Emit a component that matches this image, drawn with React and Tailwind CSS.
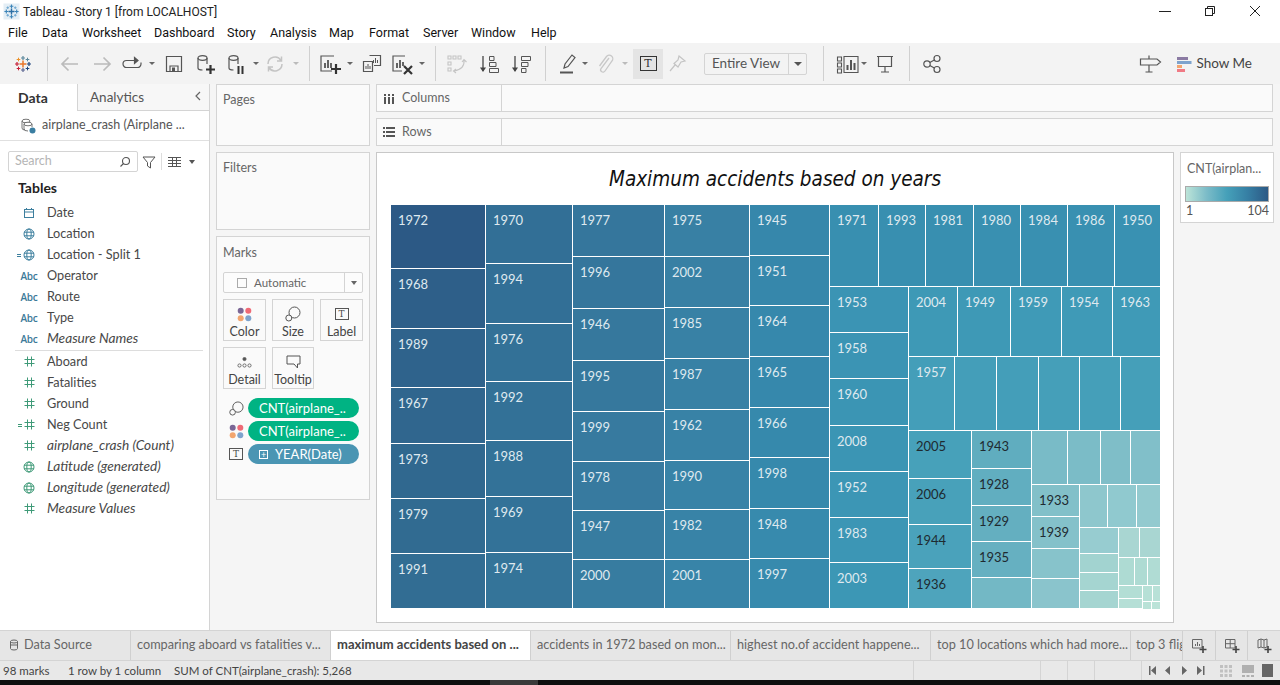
import React from "react";

const S = ({ children, className = "w-6 h-6", vb = "0 0 24 24" }) => (
  <svg viewBox={vb} className={"shrink-0 " + className} fill="none" stroke="#555" strokeWidth="1.2">{children}</svg>
);
const Caret = ({ className = "", color = "border-t-[#666]" }) => (
  <span className={"shrink-0 w-2 h-6 flex items-center justify-center " + className}>
    <span className={"block w-0 h-0 border-x-[3px] border-x-transparent border-t-[3.5px] " + color}></span>
  </span>
);
const Div = ({ className = "" }) => <span className={"shrink-0 w-px h-[35px] bg-[#d0d0d0] " + className}></span>;

const Cross = ({ x, y, c, r = 3, w = 1.5 }) => (
  <g stroke={c} strokeWidth={w}>
    <path d={`M${x - r} ${y}H${x + r}M${x} ${y - r}V${y + r}`} />
  </g>
);
const TabLogo = ({ className = "w-[18px] h-[18px]" }) => (
  <svg viewBox="0 0 18 18" className={"shrink-0 " + className}>
    <Cross x={9} y={9} c="#e8762b" r={3.5} />
    <Cross x={9} y={3} c="#5b879b" r={2} w={1.2} />
    <Cross x={9} y={15} c="#5b6591" r={2} w={1.2} />
    <Cross x={3} y={9} c="#c72037" r={2} w={1.2} />
    <Cross x={15} y={9} c="#1f457e" r={2} w={1.2} />
    <Cross x={4.5} y={4.5} c="#eb9129" r={1.8} w={1} />
    <Cross x={13.5} y={4.5} c="#5b879b" r={1.8} w={1} />
    <Cross x={4.5} y={13.5} c="#c72037" r={1.8} w={1} />
    <Cross x={13.5} y={13.5} c="#1f457e" r={1.8} w={1} />
  </svg>
);
const TitleLogo = () => (
  <svg viewBox="0 0 18 18" className="w-[17px] h-[17px] shrink-0 ml-px">
    <rect x="0.5" y="0.5" width="17" height="17" fill="#e4eef5" />
    <Cross x={9} y={9} c="#2b6ea5" r={3.2} />
    <Cross x={9} y={3.5} c="#3c84b8" r={2} w={1.2} />
    <Cross x={9} y={14.5} c="#3c84b8" r={2} w={1.2} />
    <Cross x={3.5} y={9} c="#3c84b8" r={2} w={1.2} />
    <Cross x={14.5} y={9} c="#3c84b8" r={2} w={1.2} />
    <Cross x={5} y={5} c="#6aa5cf" r={1.4} w={1} />
    <Cross x={13} y={5} c="#6aa5cf" r={1.4} w={1} />
    <Cross x={5} y={13} c="#6aa5cf" r={1.4} w={1} />
    <Cross x={13} y={13} c="#6aa5cf" r={1.4} w={1} />
  </svg>
);
const Dots = ({ className = "w-[15px] h-[15px]" }) => (
  <svg viewBox="0 0 15 15" className={"shrink-0 " + className}>
    <circle cx="3.7" cy="3.7" r="3" fill="#7b6796" />
    <circle cx="11.3" cy="3.7" r="3" fill="#ef6a76" />
    <circle cx="3.7" cy="11.3" r="3" fill="#f2a56f" />
    <circle cx="11.3" cy="11.3" r="3" fill="#7ea3cd" />
  </svg>
);
const SizeIcon = ({ className = "w-4 h-4" }) => (
  <svg viewBox="0 0 16 16" className={"shrink-0 " + className} fill="none" stroke="#555" strokeWidth="1">
    <circle cx="9.5" cy="6.5" r="5.5" fill="#fafafa" />
    <circle cx="3.8" cy="12" r="3" fill="#fafafa" />
  </svg>
);
const TBox = ({ className = "w-[14px] h-[12px]" }) => (
  <span className={"shrink-0 border border-[#555] flex items-center justify-center text-[9px] leading-none font-['DejaVu_Serif',serif] text-[#444] " + className}>T</span>
);

const Globe = ({ c = "#3d7f9e" }) => (
  <svg viewBox="0 0 12 12" className="w-3 h-3 shrink-0" fill="none" stroke={c} strokeWidth="1">
    <circle cx="6" cy="6" r="5" />
    <ellipse cx="6" cy="6" rx="2.2" ry="5" />
    <path d="M1 4.2H11M1 7.8H11" />
  </svg>
);
const Hash = () => (
  <svg viewBox="0 0 11 11" className="w-[11px] h-[11px] shrink-0" fill="none" stroke="#3f9a78" strokeWidth="1">
    <path d="M3.5 0.5V10.5M7.5 0.5V10.5M0.5 3.5H10.5M0.5 7.5H10.5" />
  </svg>
);
const Cal = () => (
  <svg viewBox="0 0 12 12" className="w-3 h-3 shrink-0" fill="none" stroke="#3d7f9e" strokeWidth="1">
    <rect x="1.5" y="2.5" width="9" height="8" />
    <path d="M1.5 5H10.5M3.5 1V3M8.5 1V3" />
  </svg>
);
const Abc = () => <span className="text-[10px] font-semibold text-[#3d7a99] leading-none font-['Open_Sans',sans-serif] tracking-[-0.2px]">Abc</span>;
const Eq = ({ c }) => <span className={"absolute left-[-6px] top-[5px] w-[4px] h-[3px] border-y " + c}></span>;

const fields1 = [
  ["Date", <Cal />],
  ["Location", <Globe />],
  ["Location - Split 1", <span className="relative flex"><Eq c="border-[#3d7f9e]" /><Globe /></span>],
  ["Operator", <Abc />],
  ["Route", <Abc />],
  ["Type", <Abc />],
  ["Measure Names", <Abc />, true],
];
const fields2 = [
  ["Aboard", <Hash />],
  ["Fatalities", <Hash />],
  ["Ground", <Hash />],
  ["Neg Count", <span className="relative flex"><Eq c="border-[#3f9a78]" /><Hash /></span>],
  ["airplane_crash (Count)", <Hash />, true],
  ["Latitude (generated)", <Globe c="#3f9a78" />, true],
  ["Longitude (generated)", <Globe c="#3f9a78" />, true],
  ["Measure Values", <Hash />, true],
];
const Field = ({ f }) => (
  <div className="h-[21px] flex items-center">
    <span className="w-[47px] pl-[17px] pr-[6px] flex justify-center shrink-0">{f[1]}</span>
    <span className={"text-[#484848] whitespace-nowrap " + (f[2] ? "italic text-[13.7px]" : "text-[12.7px]")}>{f[0]}</span>
  </div>
);

/* treemap data: boundaries are the first pixel of each tile, the last entry one past the end */
const L = (l, c, dark) => ({ l, c, dark });
const along = (dir, b, kids) => ({
  dir,
  kids: kids.map((k, i) => ({ ...k, s: b[i + 1] - b[i] - 1 })),
});
const B = (c) => ({ c });

const bottom = along("row", [909, 972, 1032, 1161], [
  along("col", [431, 479, 525, 569, 609], [L("2005", "#47a1ba", 1), L("2006", "#48a1ba", 1), L("1944", "#4aa2bb", 1), L("1936", "#4ea4bc", 1)]),
  along("col", [431, 469, 506, 542, 578, 609], [L("1943", "#60adbf", 1), L("1928", "#61aec0", 1), L("1929", "#64afc0", 1), L("1935", "#66b0c1", 1), B("#73b8c5")]),
  along("col", [431, 485, 609], [
    along("row", [1032, 1068, 1101, 1131, 1161], [B("#79bbc7"), B("#7bbcc7"), B("#7fbec8"), B("#81bfc9")]),
    along("row", [1032, 1080, 1161], [
      along("col", [485, 517, 549, 579, 609], [L("1933", "#82c0c9", 1), L("1939", "#84c1ca", 1), B("#87c3cb"), B("#8ac4cc")]),
      along("col", [485, 528, 609], [
        along("row", [1080, 1108, 1137, 1161], [B("#8ec7cd"), B("#90c9cf"), B("#93cacf")]),
        along("row", [1080, 1119, 1161], [
          along("col", [528, 554, 573, 591, 609], [B("#97ccd0"), B("#a2d3d0"), B("#a5d5d1"), B("#a5d5d1")]),
          along("col", [528, 558, 586, 609], [
            along("row", [1119, 1140, 1161], [B("#a9d6d2"), B("#a9d6d2")]),
            along("row", [1119, 1135, 1148, 1161], [B("#aedbd3"), B("#aedbd3"), B("#b0dcd4")]),
            along("row", [1119, 1143, 1161], [
              along("col", [586, 599, 609], [B("#b3ded5"), B("#b5dfd6")]),
              along("col", [586, 602, 609], [
                along("row", [1143, 1153, 1161], [B("#b6e0d6"), B("#b8e1d7")]),
                along("row", [1143, 1152, 1161], [B("#b9e2d7"), B("#bbe3d8")]),
              ]),
            ]),
          ]),
        ]),
      ]),
    ]),
  ]),
]);

const tree = along("row", [391, 486, 573, 665, 750, 830, 1161], [
  along("col", [205, 269, 329, 388, 444, 499, 554, 609], [
    L("1972", "#2c5985"), L("1968", "#2e5f89"), L("1989", "#2f638c"), L("1967", "#30668e"), L("1973", "#30688f"), L("1979", "#316b91"), L("1991", "#326d93"),
  ]),
  along("col", [205, 264, 324, 382, 441, 497, 553, 609], [
    L("1970", "#326f96"), L("1994", "#326f96"), L("1976", "#337197"), L("1992", "#337197"), L("1988", "#337298"), L("1969", "#337298"), L("1974", "#347499"),
  ]),
  along("col", [205, 257, 309, 361, 412, 462, 511, 560, 609], [
    L("1977", "#35769c"), L("1996", "#35769c"), L("1946", "#36789d"), L("1995", "#36789d"), L("1999", "#377a9f"), L("1978", "#377a9f"), L("1947", "#377ca0"), L("2000", "#377ca0"),
  ]),
  along("col", [205, 257, 308, 359, 410, 461, 510, 560, 609], [
    L("1975", "#3880a4"), L("2002", "#3880a4"), L("1985", "#3881a5"), L("1987", "#3881a5"), L("1962", "#3882a6"), L("1990", "#3883a7"), L("1982", "#3883a7"), L("2001", "#3884a8"),
  ]),
  along("col", [205, 256, 306, 357, 408, 458, 509, 559, 609], [
    L("1945", "#3687ab"), L("1951", "#3687ab"), L("1964", "#3688ac"), L("1965", "#3688ac"), L("1966", "#3689ac"), L("1998", "#3689ac"), L("1948", "#378aad"), L("1997", "#378aad"),
  ]),
  along("col", [205, 287, 609], [
    along("row", [830, 879, 926, 974, 1021, 1068, 1115, 1161], [
      L("1971", "#388fb0"), L("1993", "#388fb0"), L("1981", "#388fb0"), L("1980", "#3990b1"), L("1984", "#3990b1"), L("1986", "#3990b1"), L("1950", "#3991b2"),
    ]),
    along("row", [830, 909, 1161], [
      along("col", [287, 333, 379, 426, 472, 518, 563, 609], [
        L("1953", "#3b94b4"), L("1958", "#3b94b4"), L("1960", "#3b95b4"), L("2008", "#3b95b4"), L("1952", "#3c96b5"), L("1983", "#3c96b5"), L("2003", "#3c97b5"),
      ]),
      along("col", [287, 357, 431, 609], [
        along("row", [909, 958, 1011, 1062, 1113, 1161], [
          L("2004", "#3e99b6"), L("1949", "#3e99b6"), L("1959", "#3f9ab7"), L("1954", "#3f9ab7"), L("1963", "#3f9ab7"),
        ]),
        along("row", [909, 955, 997, 1039, 1080, 1121, 1161], [
          L("1957", "#449eb9"), B("#449eb9"), B("#449eb9"), B("#459fb9"), B("#459fb9"), B("#459fb9"),
        ]),
        bottom,
      ]),
    ]),
  ]),
]);

const Node = ({ n, last }) => {
  const sizeStyle = last ? { flex: "1 1 0", minWidth: 0, minHeight: 0 } : { flex: `0 0 ${n.s}px`, minWidth: 0, minHeight: 0 };
  if (n.kids) {
    return (
      <div className={"flex gap-px " + (n.dir === "row" ? "flex-row" : "flex-col")} style={sizeStyle}>
        {n.kids.map((k, i) => <Node key={i} n={k} last={i === n.kids.length - 1} />)}
      </div>
    );
  }
  return (
    <div
      className={"text-[13px] leading-[16px] pl-[7px] pt-[7px] overflow-hidden " + (n.dark ? "text-[#1e2a30]" : "text-[#dfe9ef]")}
      style={{ ...sizeStyle, backgroundColor: n.c }}
    >
      {n.l}
    </div>
  );
};

const MarkBtn = ({ label, icon, className = "" }) => (
  <div className={"h-[42px] border border-[#d4d4d4] flex flex-col items-center justify-between pt-[6px] pb-px text-[12.5px] leading-[14px] text-[#444] " + className}>
    <span className="h-4 flex items-center">{icon}</span>
    <span>{label}</span>
  </div>
);
const Pill = ({ icon, blue, children }) => (
  <div className="h-[20px] flex items-center mb-[3px]">
    <span className="w-[25px] pl-[6px] shrink-0 flex">{icon}</span>
    <span className={"w-[111px] h-[20px] rounded-full text-white text-[13px] leading-[19px] flex items-center pl-[11px] whitespace-nowrap " + (blue ? "bg-[#4a95b3]" : "bg-[#00b383]")}>{children}</span>
  </div>
);

const tabs = [
  "comparing aboard vs fatalities v...",
  "maximum accidents based on ...",
  "accidents in 1972 based on mon...",
  "highest no.of accident happene...",
  "top 10 locations which had more...",
];
const menu = [
  ["File", "w-[34px]"], ["Data", "w-[40px]"], ["Worksheet", "w-[72px]"], ["Dashboard", "w-[73px]"], ["Story", "w-[43px]"],
  ["Analysis", "w-[59px]"], ["Map", "w-[40px]"], ["Format", "w-[54px]"], ["Server", "w-[48px]"], ["Window", "w-[60px]"], ["Help", "w-[30px]"],
];

export default function App() {
  return (
    <div className="w-[1280px] h-[685px] overflow-hidden flex flex-col bg-white font-['Lato',sans-serif] text-[#444]">
      {/* title bar */}
      <div className="h-[22px] flex items-center shrink-0 pl-[2px] font-['Roboto',sans-serif]">
        <TitleLogo />
        <span className="ml-[3px] pt-px text-[12px] text-[#222] whitespace-nowrap">Tableau - Story 1 [from LOCALHOST]</span>
        <div className="ml-auto flex items-center">
          <span className="w-[12px] h-px bg-[#222]"></span>
          <svg viewBox="0 0 12 12" className="w-3 h-3 ml-[33px]" fill="none" stroke="#222" strokeWidth="1"><rect x="1.5" y="3.5" width="7" height="7" /><path d="M3.5 3.5V1.5H10.5V8.5H8.5" /></svg>
          <svg viewBox="0 0 12 12" className="w-3 h-3 ml-[33px] mr-[19px]" fill="none" stroke="#222" strokeWidth="1"><path d="M1 1L11 11M11 1L1 11" /></svg>
        </div>
      </div>
      {/* menu bar */}
      <div className="h-[21px] flex items-center shrink-0 pl-[8px] pt-[2px] text-[12.5px] text-[#111] font-['Roboto',sans-serif] whitespace-nowrap">
        {menu.map((m) => <span key={m[0]} className={m[1]}>{m[0]}</span>)}
      </div>
      {/* toolbar */}
      <div className="h-[41px] shrink-0 bg-[#f3f3f3] flex items-center">
        <span className="ml-[14px] w-[18px] flex"><TabLogo /></span>
        <Div className="ml-[15px]" />
        <S className="w-6 h-6 ml-[10px]"><path d="M20 12H4.5M10.5 5.5L4 12L10.5 18.5" stroke="#bbb" strokeWidth="1.7" /></S>
        <S className="w-6 h-6 ml-2"><path d="M4 12H19.5M13.5 5.5L20 12L13.5 18.5" stroke="#bbb" strokeWidth="1.7" /></S>
        <S className="w-6 h-6 ml-[5px]"><path d="M15 8.5H7.5A3.5 3.5 0 0 0 7.5 15.5H18.5A3.5 3.5 0 0 0 22 12V10.5" /><path d="M15.5 5.5L19 8.5L15.5 11.5Z" fill="#555" /></S>
        <Caret className="ml-[5px]" />
        <S className="w-6 h-6 ml-[6px]"><path d="M4.5 4.5H19.5V19.5H4.5Z" /><path d="M8 19.5V14H16V19.5" /><rect x="10" y="15.5" width="3" height="4" fill="#555" stroke="none" /></S>
        <S className="w-6 h-6 ml-[7px]"><ellipse cx="9.5" cy="6" rx="4.5" ry="2.3" /><path d="M5 6V16Q5 18 9.5 18M14 6V12" /><path d="M17.5 13V22M13 17.5H22" stroke="#333" strokeWidth="2.2" /></S>
        <S className="w-6 h-6 ml-[7px]"><ellipse cx="9.5" cy="6" rx="4.5" ry="2.3" /><path d="M5 6V16Q5 18 9.5 18M14 6V12" /><path d="M14.5 14V22M18.5 14V22" stroke="#333" strokeWidth="2" /></S>
        <Caret className="ml-1" />
        <S className="w-6 h-6 ml-[3px]"><path d="M5 12A7 7 0 0 1 18 8.5M19 12A7 7 0 0 1 6 15.5M18.5 4.5V9H14M5.5 19.5V15H10" stroke="#c4c4c4" strokeWidth="1.5" /></S>
        <Caret className="ml-[5px]" color="border-t-[#bbb]" />
        <Div className="ml-[9px]" />
        <S className="w-6 h-6 ml-2"><path d="M16 4H3V19H14" /><path d="M7 16V11M10 16V8M13 16V11" strokeWidth="1.8" /><path d="M18 12V22M13 17H23" stroke="#333" strokeWidth="2.2" /></S>
        <Caret className="ml-1" />
        <S className="w-6 h-6 ml-[6px]"><path d="M9.5 3.5H20.5V13.5H14" /><path d="M13.5 11V8M15.5 11V6M17.5 11V8" strokeWidth="1" /><path d="M3.5 9.5H12.5V19.5H3.5Z" fill="#f3f3f3" /><path d="M6 17V14M8 17V12M10 17V14" strokeWidth="1" /></S>
        <S className="w-6 h-6 ml-[6px]"><path d="M15 4H3V19H12" /><path d="M7 16V11M10 16V8M13 14V10" strokeWidth="1.8" /><path d="M14 14L22 22M22 14L14 22" stroke="#333" strokeWidth="2.2" /></S>
        <Caret className="ml-1" />
        <Div className="ml-[9px]" />
        <S className="w-6 h-6 ml-[9px]"><g stroke="#c4c4c4" strokeWidth="1.1"><path d="M3 4H6V7H3ZM8 4H11V7H8ZM13 4H16V7H13ZM3 10H6V13H3ZM3 16H6V19H3Z" /><path d="M19 8Q20 17 9 19M17 10L19 7.5L21.5 10M11 17L8.5 19L11 21" /></g></S>
        <S className="w-6 h-6 ml-2"><path d="M6 4V19" stroke="#444" strokeWidth="1.3" /><path d="M3 15.5H9L6 20Z" fill="#444" stroke="none" /><path d="M12.5 4.5H17V8.5H12.5ZM12.5 10.5H19V14.5H12.5ZM12.5 16.5H21.5V20.5H12.5Z" strokeWidth="1" /></S>
        <S className="w-6 h-6 ml-2"><path d="M6 4V19" stroke="#444" strokeWidth="1.3" /><path d="M3 15.5H9L6 20Z" fill="#444" stroke="none" /><path d="M12.5 4.5H21.5V8.5H12.5ZM12.5 10.5H19V14.5H12.5ZM12.5 16.5H17V20.5H12.5Z" strokeWidth="1" /></S>
        <Div className="ml-3" />
        <S className="w-6 h-6 ml-[10px]"><path d="M8 16L9 12L16 3L19 5.5L12 14.5Z" /><path d="M4 20.5H17" stroke="#555" strokeWidth="2" /></S>
        <Caret className="ml-px" />
        <S className="w-6 h-6 ml-1"><path d="M16 6L8 16.5A2.3 2.3 0 0 0 12 19L19 9A3.5 3.5 0 0 0 13.5 4.5L6.5 14" stroke="#c8c8c8" strokeWidth="1.3" /></S>
        <Caret className="ml-1" color="border-t-[#bbb]" />
        <span className="ml-1 w-[30px] h-[30px] bg-[#e4e4e4] flex items-center justify-center shrink-0">
          <span className="w-[17px] h-[15px] border border-[#333] flex items-center justify-center text-[11px] leading-none font-['DejaVu_Serif',serif] text-[#333]">T</span>
        </span>
        <S className="w-6 h-6 ml-[2px]"><path d="M14 4L20 9L16 10L13 15L9 11.5L13 8ZM10 13L5 19" stroke="#c4c4c4" strokeWidth="1.2" /></S>
        <div className="ml-[15px] w-[103px] h-[22px] border border-[#d4d4d4] rounded-[2px] flex items-center shrink-0 text-[13.5px] text-[#555]">
          <span className="flex-1 pl-[7px] whitespace-nowrap">Entire View</span>
          <span className="w-[18px] h-full border-l border-[#d4d4d4] flex items-center justify-center"><span className="block w-0 h-0 border-x-[4px] border-x-transparent border-t-[4px] border-t-[#555]"></span></span>
        </div>
        <Div className="ml-4" />
        <S className="w-6 h-6 ml-3"><path d="M1.5 5H5.5V9H1.5ZM1.5 11H5.5V15H1.5ZM1.5 17H5.5V21H1.5ZM8 4.5H22V20.5H8Z" strokeWidth="1.1" /><path d="M11.5 18V13M15 18V8M18.5 18V11" strokeWidth="2" /></S>
        <Caret />
        <S className="w-6 h-6 ml-[5px]"><path d="M4 4.5H20M5.5 4.5V14.5H18.5V4.5M12 14.5V20M8 20H16" /></S>
        <Div className="ml-3" />
        <S className="w-6 h-6 ml-[10px]"><circle cx="7" cy="12" r="3.2" /><circle cx="17" cy="6.5" r="3" /><circle cx="17" cy="17.5" r="3" /><path d="M9.8 10.5L14.3 8M9.8 13.5L14.3 16" /></S>
        <div className="ml-auto flex items-center pr-[28px]">
          <S className="w-6 h-6"><path d="M2.5 7H19L22.5 10L19 13H2.5ZM11 3.5V7M11 13V20M7.5 20H14.5" /></S>
          <svg viewBox="0 0 15 16" className="w-[15px] h-4 ml-[15px] shrink-0">
            <rect x="0" y="1" width="11" height="3" fill="#8b7ba3" />
            <rect x="0" y="5" width="14.5" height="3" fill="#7ea3cd" />
            <rect x="0" y="9" width="5" height="3" fill="#f2a56f" />
            <rect x="0" y="13" width="8" height="3" fill="#f07a85" />
          </svg>
          <span className="ml-[4px] text-[13.5px] leading-[16px] pb-[2px] text-[#444] whitespace-nowrap">Show Me</span>
        </div>
      </div>

      {/* body */}
      <div className="flex-1 min-h-0 flex bg-[#f5f5f5]">
        {/* data pane */}
        <div className="w-[210px] shrink-0 bg-white border-r border-[#d4d4d4] flex flex-col">
          <div className="h-[27px] flex shrink-0">
            <div className="w-[77px] pl-[18px] pt-[3px] text-[14px] font-bold text-[#333]">Data</div>
            <div className="flex-1 bg-[#f7f7f7] border-l border-b border-[#d4d4d4] pl-[12px] pt-[3px] text-[13.5px] text-[#555] flex justify-between pr-[7px]">
              <span>Analytics</span>
              <svg viewBox="0 0 8 12" className="w-2 h-3 mt-[3px]" fill="none" stroke="#666" strokeWidth="1.2"><path d="M6 2L2 6L6 10" /></svg>
            </div>
          </div>
          <div className="h-[30px] shrink-0 border-b border-[#e0e0e0] flex items-center pl-[20px]">
            <svg viewBox="0 0 16 16" className="w-4 h-4 shrink-0" fill="none" stroke="#666" strokeWidth="0.9">
              <ellipse cx="6" cy="3" rx="4" ry="1.8" /><path d="M2 3V10Q2 12 5 12" /><ellipse cx="8" cy="6" rx="4" ry="1.8" fill="#fff" /><path d="M4 6V11Q4 13 8 13M12 6V9" />
              <circle cx="12.5" cy="12.5" r="3" fill="#3a7ea1" stroke="none" />
            </svg>
            <span className="ml-[6px] text-[12.5px] text-[#555] whitespace-nowrap">airplane_crash (Airplane ...</span>
          </div>
          <div className="mt-[10px] flex items-center pl-[8px] shrink-0">
            <div className="w-[130px] h-[21px] border border-[#d4d4d4] rounded-[2px] flex items-center justify-between px-[6px] text-[12.5px] text-[#b5b5b5]">
              <span>Search</span>
              <svg viewBox="0 0 12 12" className="w-3 h-3" fill="none" stroke="#555" strokeWidth="1.1"><circle cx="7" cy="5" r="3.5" /><path d="M4.5 7.5L1.5 10.5" /></svg>
            </div>
            <svg viewBox="0 0 14 14" className="w-[14px] h-[14px] ml-[4px]" fill="none" stroke="#555" strokeWidth="1"><path d="M1 2H13L8.5 7.5V13L5.5 11V7.5Z" /></svg>
            <span className="w-px h-[17px] bg-[#ddd] ml-[5px]"></span>
            <svg viewBox="0 0 13 10" className="w-[13px] h-[10px] ml-[6px]" fill="none" stroke="#555" strokeWidth="1"><path d="M0 .5H13M0 3.5H13M0 6.5H13M0 9.5H13M4.5 0V10M8.5 0V10" /></svg>
            <span className="ml-[8px] block w-0 h-0 border-x-[3.5px] border-x-transparent border-t-[4px] border-t-[#555]"></span>
          </div>
          <div className="mt-[7px] pl-[18px] h-[18px] text-[14px] leading-[18px] font-bold text-[#222] shrink-0">Tables</div>
          <div className="mt-[5px] shrink-0">
            {fields1.map((f) => <Field key={f[0]} f={f} />)}
          </div>
          <div className="ml-[15px] mr-[6px] h-px bg-[#ddd] mt-[1px] shrink-0"></div>
          <div className="shrink-0">
            {fields2.map((f) => <Field key={f[0]} f={f} />)}
          </div>
        </div>

        {/* shelves column */}
        <div className="w-[154px] ml-[6px] shrink-0 flex flex-col">
          <div className="h-[62px] border border-[#d4d4d4] bg-[#fafafa] pl-[6px] pt-[7px] text-[12.5px] leading-[16px] text-[#666]">Pages</div>
          <div className="h-[78px] mt-[6px] border border-[#d4d4d4] bg-[#fafafa] pl-[6px] pt-[7px] text-[12.5px] leading-[16px] text-[#666]">Filters</div>
          <div className="h-[264px] mt-[6px] border border-[#d4d4d4] bg-[#fafafa] pl-[6px] pr-[6px]">
            <div className="pt-[8px] h-[35px] text-[12.5px] leading-[16px] text-[#666]">Marks</div>
            <div className="h-[21px] border border-[#d4d4d4] rounded-[2px] flex items-center bg-[#fcfcfc]">
              <span className="w-[10px] h-[10px] ml-[13px] border border-[#aaa] shrink-0"></span>
              <span className="ml-[7px] flex-1 text-[11.5px] text-[#666]">Automatic</span>
              <span className="w-[18px] h-full border-l border-[#d4d4d4] flex items-center justify-center"><span className="block w-0 h-0 border-x-[3.5px] border-x-transparent border-t-[4px] border-t-[#666]"></span></span>
            </div>
            <div className="mt-[6px] flex gap-[6px]">
              <MarkBtn className="w-[43px]" label="Color" icon={<Dots />} />
              <MarkBtn className="w-[42px]" label="Size" icon={<SizeIcon />} />
              <MarkBtn className="w-[43px]" label="Label" icon={<TBox />} />
            </div>
            <div className="mt-[6px] flex gap-[6px]">
              <MarkBtn className="w-[43px]" label="Detail" icon={
                <svg viewBox="0 0 15 11" className="w-[15px] h-[11px]" fill="none" stroke="#555" strokeWidth="0.8"><circle cx="7.5" cy="2" r="1.6" fill="#555" /><circle cx="2.5" cy="8.5" r="1.6" /><circle cx="7.5" cy="8.5" r="1.6" /><circle cx="12.5" cy="8.5" r="1.6" /></svg>
              } />
              <MarkBtn className="w-[42px]" label="Tooltip" icon={
                <svg viewBox="0 0 15 14" className="w-[15px] h-[14px]" fill="none" stroke="#555" strokeWidth="1"><path d="M1 1H14V9H11.5V13L8 9H1Z" /></svg>
              } />
            </div>
            <div className="mt-[9px]">
              <Pill icon={<SizeIcon className="w-[15px] h-[15px]" />}>CNT(airplane_..</Pill>
              <Pill icon={<Dots />}>CNT(airplane_..</Pill>
              <Pill blue icon={<TBox />}>
                <span className="w-[9px] h-[9px] border border-white mr-[7px] flex items-center justify-center text-[9px] leading-none shrink-0">+</span>
                YEAR(Date)
              </Pill>
            </div>
          </div>
        </div>

        {/* view */}
        <div className="ml-[6px] w-[897px] shrink-0 flex flex-col">
          <div className="h-[28px] border border-[#d4d4d4] bg-[#fafafa] flex items-center">
            <div className="w-[125px] h-full border-r border-[#d4d4d4] flex items-center pl-[7px] pt-px text-[12.5px] text-[#666]">
              <svg viewBox="0 0 10 10" className="w-[10px] h-[10px]" fill="#555"><rect x="0" y="3" width="2" height="7" /><rect x="4" y="3" width="2" height="7" /><rect x="8" y="3" width="2" height="7" /><rect x="0" y="0" width="2" height="2" /><rect x="4" y="0" width="2" height="2" /><rect x="8" y="0" width="2" height="2" /></svg>
              <span className="ml-[8px]">Columns</span>
            </div>
          </div>
          <div className="h-[28px] mt-[6px] border border-[#d4d4d4] bg-[#fafafa] flex items-center">
            <div className="w-[125px] h-full border-r border-[#d4d4d4] flex items-center pl-[6px] text-[12.5px] text-[#666]">
              <svg viewBox="0 0 12 10" className="w-3 h-[10px]" fill="#555"><rect x="0" y="0" width="2" height="2" /><rect x="3" y="0" width="9" height="2" /><rect x="0" y="4" width="2" height="2" /><rect x="3" y="4" width="9" height="2" /><rect x="0" y="8" width="2" height="2" /><rect x="3" y="8" width="9" height="2" /></svg>
              <span className="ml-[7px]">Rows</span>
            </div>
          </div>
          <div className="mt-[6px] flex flex-1 min-h-0">
            <div className="w-[798px] h-[471px] shrink-0 border border-[#c8c8c8] bg-white flex flex-col">
              <div className="h-[52px] shrink-0 flex items-center justify-center font-['DejaVu_Sans_Condensed','DejaVu_Sans',sans-serif] italic text-[20.5px] text-[#111]">Maximum accidents based on years</div>
              <div className="h-[403px] ml-[14px] mr-[13px] flex">
                <Node n={tree} last />
              </div>
            </div>
            <div className="ml-[6px] w-[94px] h-[71px] border border-[#d4d4d4] bg-white pl-[4px] pr-[4px] shrink-0">
              <div className="pt-[8px] pl-[2px] h-[33px] text-[12.5px] leading-[16px] text-[#666] whitespace-nowrap">CNT(airplan...</div>
              <div className="h-[16px] border border-[#aaa] bg-[linear-gradient(90deg,#bce4d8,#7cbcc8_25%,#45a0b9_50%,#367fa4_75%,#2c5985)]"></div>
              <div className="flex justify-between text-[12.5px] leading-[14px] mt-[2px] text-[#555]"><span className="pl-px">1</span><span>104</span></div>
            </div>
          </div>
        </div>
      </div>

      {/* tabs */}
      <div className="h-[30px] shrink-0 bg-[#e6e6e6] border-t border-[#d4d4d4] flex text-[12.7px] text-[#666] whitespace-nowrap">
        <div className="w-[131px] border-r border-[#d0d0d0] flex items-center pl-[9px] pb-px shrink-0">
          <svg viewBox="0 0 10 12" className="w-[10px] h-3" fill="none" stroke="#666" strokeWidth="1"><ellipse cx="5" cy="2.5" rx="3.5" ry="1.5" /><path d="M1.5 2.5V9.5Q1.5 11 5 11T8.5 9.5V2.5M1.5 6H8.5" /></svg>
          <span className="ml-[5px]">Data Source</span>
        </div>
        {tabs.map((t, i) => (
          <div key={t} className={"w-[200px] shrink-0 flex items-center pl-[6px] pb-px border-r border-[#d0d0d0] " + (i === 1 ? "bg-white font-bold text-[#444] text-[13px]" : "")}>{t}</div>
        ))}
        <div className="w-[51px] shrink-0 flex items-center pl-[5px] pb-px">top 3 flig</div>
        {[0, 1, 2].map((i) => (
          <div key={i} className="flex-1 border-l border-[#d0d0d0] bg-[#e6e6e6] flex items-center justify-center">
            <svg viewBox="0 0 16 16" className="w-4 h-4" fill="none" stroke="#666" strokeWidth="1">
              {i === 0 && <path d="M1.5 1.5H11V10H1.5ZM4.5 8V6M6.5 8V4M8.5 8V6" />}
              {i === 1 && <path d="M1.5 1.5H11V10H1.5ZM6.2 1.5V10M1.5 5.7H11" />}
              {i === 2 && <path d="M2 2L5 1L8 2L11 1V9L8 10L5 9L2 10ZM5 1V9M8 2V10" />}
              <path d="M12 8V15M8.5 11.5H15.5" stroke="#444" strokeWidth="1.6" />
            </svg>
          </div>
        ))}
      </div>
      {/* status bar */}
      <div className="h-[20px] shrink-0 bg-[#e8e8e8] border-t border-[#d4d4d4] flex items-center text-[11.5px] text-[#444] whitespace-nowrap pl-[3px]">
        <span className="w-[65px]">98 marks</span>
        <span className="w-[106px]">1 row by 1 column</span>
        <span className="w-[739px]">SUM of CNT(airplane_crash): 5,268</span>
        <span className="w-[127px] h-full border-l border-[#d4d4d4]"></span>
        <span className="w-[27px] h-full border-l border-[#d4d4d4]"></span>
        <span className="w-[27px] h-full border-l border-[#d4d4d4]"></span>
        <span className="w-[47px] h-full border-l border-[#d4d4d4]"></span>
        <div className="h-full border-l border-[#d4d4d4] flex items-center pl-[7px]">
          <svg viewBox="0 0 56 9" className="w-[56px] h-[9px]" fill="#666"><path d="M0 0H1.5V9H0ZM7 0V9L2 4.5ZM21 0V9L16 4.5ZM33 0V9L38 4.5ZM48 0V9L53 4.5ZM54 0H55.5V9H54Z" /></svg>
          <svg viewBox="0 0 12 12" className="w-3 h-3 ml-[15px]" fill="#c0c0c0"><path d="M0 0H3V3H0ZM4.5 0H7.5V3H4.5ZM9 0H12V3H9ZM0 4.5H3V7.5H0ZM4.5 4.5H7.5V7.5H4.5ZM9 4.5H12V7.5H9ZM0 9H3V12H0ZM4.5 9H7.5V12H4.5ZM9 9H12V12H9Z" /></svg>
          <svg viewBox="0 0 12 12" className="w-3 h-3 ml-[10px]" fill="#b0b0b0"><path d="M0 0H12V8H0ZM0 10H3V12H0ZM4.5 10H7.5V12H4.5ZM9 10H12V12H9Z" /></svg>
          <span className="w-[11px] h-[13px] bg-[#666] ml-[8px]"></span>
        </div>
      </div>
      {/* strip of the desktop below the window */}
      <div className="h-[5px] shrink-0 bg-[#0e0e0e] flex">
        <span className="ml-[490px] w-[48px] bg-[#3a3a3a]"></span>
      </div>
    </div>
  );
}
